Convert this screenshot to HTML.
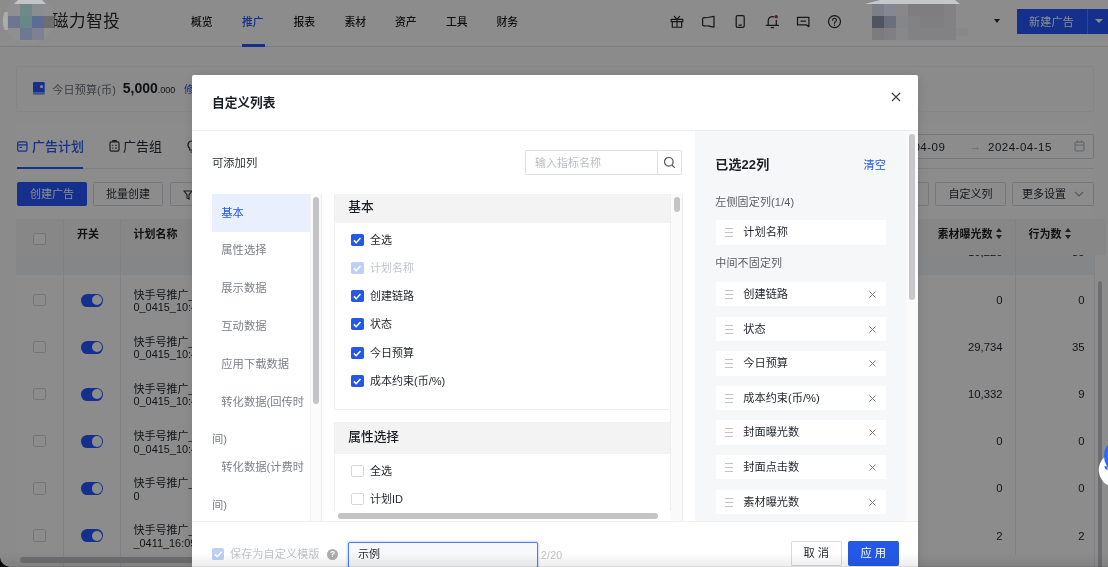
<!DOCTYPE html>
<html lang="zh-CN">
<head>
<meta charset="utf-8">
<title>磁力智投</title>
<style>
*{box-sizing:border-box;margin:0;padding:0}
html,body{width:1108px;height:567px;overflow:hidden;background:#eef0f3}
body{font-family:"Liberation Sans","Noto Sans CJK SC",sans-serif;font-size:11px;color:#1f2329;position:relative}
.abs{position:absolute}
#page{position:absolute;left:0;top:0;width:1108px;height:567px;background:#fdfdfd;overflow:hidden;will-change:transform}
/* header */
#hdr{position:absolute;left:0;top:0;width:1108px;height:47px;background:#fff;border-bottom:1px solid #e3e5e9}
#logo-t{position:absolute;left:52px;top:9px;font-size:16.500px;line-height:24px;color:#2a2a2a;letter-spacing:.6px;white-space:nowrap}
.nav{position:absolute;top:15px;font-size:10.800px;line-height:14px;font-weight:500;color:#1e1e1e;white-space:nowrap}
.nav.on{color:#2558ff}
#nav-ul{position:absolute;left:242px;top:44px;width:22.500px;height:2.500px;background:#2558ff}
.hic{position:absolute;top:14px;width:14px;height:14px}
#newad{position:absolute;left:1017px;top:9px;width:91px;height:25px;background:#2558ff;color:#fff;font-size:11px;line-height:25px}
#newad span{position:absolute;left:12px;top:1px;letter-spacing:.25px;font-size:11px}
#newad i{position:absolute;left:69.500px;top:0;width:1px;height:25px;background:#5583ff}
#newad b{position:absolute;left:78px;top:10.300px;border:4.400px solid transparent;border-top:4.800px solid #fff;width:0;height:0}
/* card */
#card{position:absolute;left:16px;top:66px;width:1078px;height:45.500px;background:#fefefe;border-radius:2px;border:1px solid #f3f3f5}
#main{position:absolute;left:16px;top:122px;width:1076px;height:460px;background:#fff}
.tab{position:absolute;top:138px;font-size:13px;line-height:18px;white-space:nowrap}
.btn{position:absolute;top:181.600px;height:24.600px;line-height:23.200px;border:1px solid #d6d9de;border-radius:1.500px;font-size:11px;text-align:center;color:#2a2e35;background:#fff;white-space:nowrap}
.btn.pri{background:#2558ff;border-color:#2558ff;color:#fff}
/* table */
#th{position:absolute;left:16px;top:219px;width:1090px;height:36px;background:#f6f6f8}
#sum{position:absolute;left:16px;top:255px;width:1078px;height:19.800px;background:#f2f5f7}
.th{position:absolute;top:226px;font-size:11px;line-height:16px;font-weight:700;color:#222;white-space:nowrap}
.vl{position:absolute;width:1px;background:#ececef}
.cb{position:absolute;left:33.300px;width:12.400px;height:12.400px;border:1px solid #d3d6db;border-radius:2px;background:#fff}
.tg{position:absolute;left:80.800px;width:22.200px;height:12.800px;border-radius:6.400px;background:#2558ff}
.tg:after{content:"";position:absolute;right:1.300px;top:1.300px;width:10.200px;height:10.200px;border-radius:5px;background:#fff}
.nm{position:absolute;left:133.500px;font-size:11px;line-height:12.200px;color:#1f2329;white-space:nowrap}
.nm span{font-size:10.900px;letter-spacing:0}
.st{display:inline-block;position:relative;width:7.600px;height:11.200px;margin-left:3.200px;vertical-align:-1.600px}
.st:before{content:"";position:absolute;left:0;top:0;border:3.800px solid transparent;border-bottom:4.600px solid #3c3c3c;border-top:0}
.st:after{content:"";position:absolute;left:0;top:6.400px;border:3.800px solid transparent;border-top:4.600px solid #3c3c3c;border-bottom:0}
.num{position:absolute;font-size:11.300px;line-height:14px;color:#1f2329;text-align:right;width:60px;white-space:nowrap}
/* mask */
#mask{position:absolute;left:0;top:0;width:1108px;height:567px;background:rgba(0,0,0,.45)}
/* modal */
#modal{will-change:transform;clip-path:inset(0 0 0 .600px);position:absolute;left:192px;top:75px;width:726px;height:500px;background:#fff;border-radius:2px 2px 0 0;overflow:hidden}
#m-title{position:absolute;left:20px;top:18px;font-size:12.700px;line-height:20px;font-weight:700;color:#1b1e24}
#m-hl{position:absolute;left:0;top:55px;width:726px;height:1px;background:#eceef1}
#rp{position:absolute;left:503px;top:56px;width:211px;height:390px;background:#f6f7f9}
#m-sb{position:absolute;left:714px;top:56px;width:12px;height:390px;background:#fafafa}
#m-sb i{position:absolute;left:3px;top:3px;width:6px;height:166px;border-radius:3px;background:#c8c8cc}
.g{color:#8f959e}
.cat{position:absolute;left:20px;width:98px;height:38px;line-height:39.600px;padding-left:9.300px;font-size:11.300px;color:#7c8088;white-space:nowrap}
.cat.on{background:#e9effd;color:#2459e8}
.wrap2{position:absolute;left:20px;font-size:11.300px;line-height:16px;color:#7c8088}
.gh{position:absolute;left:142.800px;width:335.500px;height:29px;background:#f3f3f4;font-size:12.700px;font-weight:500;line-height:27px;padding-left:13.500px;color:#1b1e24}
.ck{position:absolute;left:159.200px;width:12.400px;height:12.400px;border-radius:1.800px;background:#2459e8}
.ck svg{position:absolute;left:0;top:0}
.ck.dis{background:#bcd0f8}
.ck.off{background:#fff;border:1px solid #d3d6db}
.cl{position:absolute;left:178px;font-size:11px;line-height:16px;color:#1f2329;white-space:nowrap}
.cl.dis{color:#bfc3ca}
.it{position:absolute;left:523.500px;width:170.300px;height:24.400px;background:#fff;font-size:11.200px;line-height:25.400px;color:#1f2329;white-space:nowrap}
.it s{position:absolute;left:9px;top:8px;width:8px;height:9px;border-top:1px solid #bfc2c7;border-bottom:1px solid #bfc2c7;text-decoration:none}
.it s:after{content:"";position:absolute;left:0;top:3px;width:8px;height:1px;background:#bfc2c7}
.it span{position:absolute;left:27.800px;top:0}
.it svg{position:absolute;left:153.300px;top:9px}
.sl{position:absolute;left:523.300px;letter-spacing:.15px;font-size:11px;line-height:16px;color:#5a5f68;white-space:nowrap}
#foot{position:absolute;left:0;top:446px;width:726px;height:60px;background:#fff;border-top:1px solid #eceef1}
.fb{position:absolute;top:19.300px;width:50.500px;height:25px;border:1px solid #d6d9de;border-radius:1.500px;font-size:11.300px;line-height:23.600px;text-align:center;color:#1f2329;background:#fff;letter-spacing:3px;padding-left:3px}
.fb.pri{background:#2459e8;border-color:#2459e8;color:#fff}
</style>
</head>
<body>
<div id="page">
  <!-- header -->
  <div id="hdr">
    <div id="logo-t">磁力智投</div>
    <div class="nav" style="left:191px">概览</div>
    <div class="nav on" style="left:242px">推广</div>
    <div class="nav" style="left:293.500px">报表</div>
    <div class="nav" style="left:344.500px">素材</div>
    <div class="nav" style="left:395px">资产</div>
    <div class="nav" style="left:446px">工具</div>
    <div class="nav" style="left:496.500px">财务</div>
    <div id="nav-ul"></div>
    <svg class="abs" style="left:660px;top:10px" width="190" height="24" viewBox="660 10 190 24" fill="none" stroke="#2b2b2b" stroke-width="1.250" stroke-linejoin="round" stroke-linecap="round">
      <path d="M671.200 19.300h11.600v2.400h-11.600zM672.300 21.900v5.300h9.400v-5.300M677 19.300l-2.600-2.900M677 19.300l2.600-2.900M677 19.500v7.500" stroke-width="1.150"/>
      <path d="M706.300 17.600h-2.300q-1.400 0-1.400 1.400v5.400q0 1.400 1.400 1.400h2.300M707.600 17.500l6.400-1.200v10.800l-6.400-1.300"/>
      <rect x="736.200" y="15.600" width="8" height="11.800" rx="1.300"/><path d="M739 25h2.400"/>
      <path d="M768.200 25.200v-4.400a4.200 4.200 0 0 1 5.600-4M776.300 20.300v4.900M766.300 25.300h12.200M771.300 27.600h2.200"/>
      <circle cx="776.200" cy="16.700" r="1.700" fill="#b5342a" stroke="none"/>
      <path d="M797.500 17.300h11.400v9.300l-2.700-1.700h-8.700zM801 21.200h4.500"/>
      <circle cx="834.500" cy="21.600" r="6"/><path d="M832.600 20.200a1.900 1.900 0 1 1 2.800 1.600c-.6.400-.9.700-.9 1.500M834.500 25v.3" stroke-width="1.150"/>
    </svg>
    <div class="abs" style="left:994.300px;top:18.600px;width:0;height:0;border:3.900px solid transparent;border-top:4.500px solid #2e2e2e"></div>
    <div id="newad"><span>新建广告</span><i></i><b></b></div>
  </div>
  <div id="card">
    <svg class="abs" style="left:16.300px;top:15.300px" width="11.700" height="12.700" viewBox="0 0 13 14" preserveAspectRatio="none"><rect x="0" y="0" width="13" height="12" rx="1.500" fill="#2558ff"/><rect x="0" y="11" width="13" height="3" rx="1" fill="#7d9df2"/><rect x="8" y="3.500" width="3" height="3" rx=".8" fill="#fff"/></svg>
    <div class="abs" style="left:35.300px;top:14.500px;font-size:11px;line-height:16px;color:#6b7078;white-space:nowrap;letter-spacing:.2px">今日预算(币)</div>
    <div class="abs" style="left:105.800px;top:11.200px;font-size:14px;line-height:20px;color:#1b1e24;font-weight:700;white-space:nowrap">5,000<span style="font-size:9px;font-weight:400">.000</span></div>
    <div class="abs" style="left:167px;top:15px;font-size:10px;line-height:16px;color:#2558ff">修改</div>
  </div>
  <div id="main"></div>
  <svg class="abs" style="left:17px;top:140.800px" width="10.600" height="11" viewBox="0 0 11 11" fill="none" stroke="#2558ff" stroke-width="1.300"><rect x=".7" y=".6" width="9.600" height="9.800" rx="1.600"/><path d="M1 3.900h9M2.800 6.300h2.400"/></svg>
  <div class="tab" style="left:32px;color:#2558ff;font-weight:500">广告计划</div>
  <div class="abs" style="left:17px;top:167.400px;width:65.500px;height:2px;background:#2558ff;z-index:2"></div>
  <svg class="abs" style="left:108.500px;top:140.400px" width="11" height="12" viewBox="0 0 11 11" preserveAspectRatio="none" fill="none" stroke="#333" stroke-width="1.200"><rect x="1" y="1.800" width="9" height="8.400" rx="1.500"/><path d="M3.800 1.500V.700h3.400v.8M3.300 5h1M6.300 5h1.400M3.300 7.500h1M6.300 7.500h1.400"/></svg>
  <div class="tab" style="left:123px;color:#2a2e35">广告组</div>
  <svg class="abs" style="left:186px;top:140px" width="12" height="13" viewBox="0 0 12 13" fill="none" stroke="#333" stroke-width="1.200"><path d="M6 1a4 4 0 0 0-2.300 7.300V10h4.600V8.300A4 4 0 0 0 6 1zM4.500 12h3"/></svg>
  <div class="btn pri" style="left:17px;width:70px">创建广告</div>
  <div class="btn" style="left:93px;width:70px">批量创建</div>
  <div class="btn" style="left:170px;width:70px"><svg class="abs" style="left:12px;top:7px" width="10" height="10" viewBox="0 0 10 10" fill="none" stroke="#333" stroke-width="1.100"><path d="M1 1h8L6 4.800V9L4 8V4.800z"/></svg></div>
  <div class="abs" style="left:760px;top:134px;width:334px;height:25px;border:1px solid #d6d9de;border-radius:2px;background:#fff"></div>
  <div class="abs" style="left:881.500px;top:139px;font-size:11.500px;line-height:16px;color:#1f2329;white-space:nowrap;letter-spacing:.5px">2024-04-09</div>
  <div class="abs" style="left:970px;top:138px;font-size:11px;line-height:16px;color:#b4b8bf">→</div>
  <div class="abs" style="left:988px;top:139px;font-size:11.500px;line-height:16px;color:#1f2329;white-space:nowrap;letter-spacing:.5px">2024-04-15</div>
  <svg class="abs" style="left:1074px;top:140.300px" width="11" height="12" viewBox="0 0 11 12" fill="none" stroke="#b4b8bf" stroke-width="1.100"><rect x="1" y="2" width="9" height="9" rx="1.200"/><path d="M1 5h9M3.500 .600v2.400M7.500 .600v2.400"/></svg>
  <div class="btn" style="left:858.500px;width:70px"></div>
  <div class="btn" style="left:935px;width:71px">自定义列</div>
  <div class="btn" style="left:1012px;width:82px;text-align:left;padding-left:9px">更多设置<svg class="abs" style="left:61px;top:8px" width="10" height="7" viewBox="0 0 10 7" fill="none" stroke="#9aa0a8" stroke-width="1.100"><path d="M1 1l4 4 4-4"/></svg></div>
  <div class="abs" style="left:16px;top:168px;width:1078px;height:1px;background:#e6e7ea"></div>
  <div id="th"></div>
  <div id="sum"></div>
  <div class="abs" style="left:1094px;top:255px;width:14px;height:312px;background:#fff;border-left:1px solid #eceef0"></div>
  <div class="abs" style="left:920px;top:255px;width:172px;height:3px;overflow:hidden"><div class="num" style="left:22.500px;top:-10.500px">10,220</div><div class="num" style="left:104.500px;top:-10.500px">35</div></div>
  <div class="cb" style="top:233px"></div>
  <div class="th" style="left:77px">开关</div>
  <div class="th" style="left:133.500px">计划名称</div>
  <div class="th" style="left:937.500px">素材曝光数<i class="st"></i></div>
  <div class="th" style="left:1028.500px">行为数<i class="st"></i></div>
  <div class="vl" style="left:63px;top:219px;height:348px"></div>
  <div class="vl" style="left:120px;top:219px;height:348px"></div>
  <div class="vl" style="left:1015px;top:219px;height:336px"></div>
  <div class="cb" style="top:293.8px"></div><div class="tg" style="top:293.8px"></div>
  <div class="nm" style="top:289.05px">快手号推广_<br><span>0_0415_10:43</span></div>
  <div class="num" style="left:942.500px;top:293.0px">0</div><div class="num" style="left:1024.500px;top:293.0px">0</div>
  <div class="cb" style="top:340.9px"></div><div class="tg" style="top:340.9px"></div>
  <div class="nm" style="top:336.15px">快手号推广_<br><span>0_0415_10:42</span></div>
  <div class="num" style="left:942.500px;top:340.1px">29,734</div><div class="num" style="left:1024.500px;top:340.1px">35</div>
  <div class="cb" style="top:388.0px"></div><div class="tg" style="top:388.0px"></div>
  <div class="nm" style="top:383.15px">快手号推广_<br><span>0_0415_10:41</span></div>
  <div class="num" style="left:942.500px;top:387.2px">10,332</div><div class="num" style="left:1024.500px;top:387.2px">9</div>
  <div class="cb" style="top:435.1px"></div><div class="tg" style="top:435.1px"></div>
  <div class="nm" style="top:430.35px">快手号推广_<br><span>0_0415_10:40</span></div>
  <div class="num" style="left:942.500px;top:434.3px">0</div><div class="num" style="left:1024.500px;top:434.3px">0</div>
  <div class="cb" style="top:482.2px"></div><div class="tg" style="top:482.2px"></div>
  <div class="nm" style="top:477.35px">快手号推广_<br><span>0</span></div>
  <div class="num" style="left:942.500px;top:481.4px">0</div><div class="num" style="left:1024.500px;top:481.4px">0</div>
  <div class="cb" style="top:529.3px"></div><div class="tg" style="top:529.3px"></div>
  <div class="nm" style="top:524.45px">快手号推广_<br><span>_0411_16:09</span></div>
  <div class="num" style="left:942.500px;top:528.5px">2</div><div class="num" style="left:1024.500px;top:528.5px">2</div>
  <div class="abs" style="left:1098px;top:280.500px;width:4px;height:300px;border-radius:2px;background:#c9c9cc"></div>
  <div class="abs" style="left:19.500px;top:556.500px;width:880px;height:6px;border-radius:3px;background:#cbcbce"></div>
</div>
<div id="mask"></div>
<svg id="ov" class="abs" style="left:0;top:0" width="1108" height="567" viewBox="0 0 1108 567">
  <!-- logo blur -->
  <circle cx="29" cy="19.500" r="24.600" fill="#8f8f91"/>
  <path d="M4.600 12a24.600 24.600 0 0 0 0 18l3.200 0v-18z" fill="#b3b4b7" opacity=".8"/>
  <path d="M18 0h24l4 4h-32z" fill="#c2c4c8"/>
  <rect x="20" y="4" width="12" height="12" fill="#6f8988"/><rect x="32" y="4" width="12" height="12" fill="#8a8e8f"/>
  <rect x="8" y="16" width="12" height="12" fill="#6e7590"/><rect x="20" y="16" width="12" height="12" fill="#6a8788"/><rect x="32" y="16" width="12" height="12" fill="#5c6d91"/><rect x="44" y="16" width="10.500" height="12" fill="#6e6e6e"/>
  <rect x="20" y="28" width="12" height="12" fill="#6f7892"/><rect x="32" y="28" width="12" height="12" fill="#7e8290"/>
  <path d="M0 567V557.500Q.8 565 9.500 567z" fill="#050505"/>
  <circle cx="1116" cy="470" r="17.300" fill="#fdfdfe"/><ellipse cx="1113.500" cy="456" rx="9.500" ry="14" fill="#2b6cf6"/><path d="M1104.500 466l3 .6v3.600q-3-1-3-4.200z" fill="#2b6cf6"/>
  <!-- account blur -->
  <path d="M880 0h75l5 4h-95z" fill="#c5c7ca"/>
  <rect x="872" y="4" width="12" height="12" fill="#7d7f88"/><rect x="884" y="4" width="12" height="12" fill="#858892"/>
  <rect x="872" y="16" width="12" height="12" fill="#4f5461"/><rect x="884" y="16" width="12" height="12" fill="#6a6f7b"/>
  <rect x="872" y="28" width="12" height="12" fill="#7c7c80"/><rect x="884" y="28" width="12" height="12" fill="#808083"/>
  <rect x="896" y="4" width="12" height="36" fill="#88888b"/><rect x="896" y="16" width="12" height="12" fill="#84868b"/>
  <rect x="908" y="4" width="48" height="36" fill="#828284"/><rect x="908" y="4" width="36" height="12" fill="#7e7e80"/><rect x="920" y="16" width="24" height="12" fill="#7f7f82"/>
  <rect x="956" y="28" width="12" height="8" fill="#87878a"/>
</svg>
<div class="abs" style="left:192.600px;top:75px;width:725.400px;height:500px;box-shadow:0 2px 12px rgba(0,0,0,.14)"></div>
<div id="modal">
  <div id="m-title">自定义列表</div>
  <div id="m-hl"></div>
  <div id="rp"></div>
  <div id="m-sb"><i></i></div>
  <svg class="abs" style="left:699px;top:17px" width="10" height="10" viewBox="0 0 10 10" fill="none" stroke="#444" stroke-width="1.300"><path d="M1 1l8 8M9 1l-8 8"/></svg>
  <div class="abs" style="left:20px;top:79.800px;font-size:11.300px;line-height:16px;color:#2a2e35">可添加列</div>
  <div class="abs" style="left:333px;top:75px;width:157px;height:25px;border:1px solid #dfe0e3;border-radius:1px;background:#fff"></div>
  <div class="abs" style="left:465px;top:75px;width:1px;height:25px;background:#dfe0e3"></div>
  <div class="abs" style="left:343px;top:79.800px;font-size:11px;line-height:16px;color:#babdc3;white-space:nowrap">输入指标名称</div>
  <svg class="abs" style="left:471px;top:80.500px" width="13" height="13" viewBox="0 0 13 13" fill="none" stroke="#555" stroke-width="1.200"><circle cx="5.800" cy="5.800" r="4.300"/><path d="M9 9l2.800 2.800"/></svg>
  <div class="abs" style="left:118.300px;top:119px;width:11px;height:327px;background:#fbfbfb;border-left:1px solid #f1f1f2"></div>
  <div class="abs" style="left:121.200px;top:122px;width:5.600px;height:207px;border-radius:3px;background:#c4c4c6"></div>
  <div class="abs" style="left:129px;top:119px;width:1px;height:327px;background:#eceef1"></div>
  <div class="abs" style="left:142.300px;top:119px;width:336.500px;height:215.600px;border:1px solid #eceef1"></div>
  <div class="abs" style="left:142.300px;top:347.200px;width:336.500px;height:120px;border:1px solid #eceef1"></div>
  <div class="abs" style="left:478px;top:119px;width:13px;height:327px;background:#fafafa;border-left:1px solid #eceef1;border-right:1px solid #eceef1"></div>
  <div class="abs" style="left:482px;top:122px;width:6px;height:15px;border-radius:3px;background:#c4c4c6"></div>
  <div class="cat on" style="top:119px">基本</div>
  <div class="cat" style="top:156px">属性选择</div>
  <div class="cat" style="top:194px">展示数据</div>
  <div class="cat" style="top:232px">互动数据</div>
  <div class="cat" style="top:270px">应用下载数据</div>
  <div class="cat" style="top:308px">转化数据(回传时</div>
  <div class="cat" style="top:373px">转化数据(计费时</div>
  <div class="wrap2" style="top:356px">间)</div>
  <div class="wrap2" style="top:422px">间)</div>
  <div class="gh" style="top:119px;height:29.400px;line-height:26.400px">基本</div>
  <div class="ck " style="top:159px"><svg width="12.400" height="12.400" viewBox="0 0 12 12" fill="none" stroke="#fff" stroke-width="1.500"><path d="M2.800 6.200l2.200 2.200 4.200-4.600"/></svg></div><div class="cl " style="top:157px">全选</div>
  <div class="ck dis" style="top:187px"><svg width="12.400" height="12.400" viewBox="0 0 12 12" fill="none" stroke="#fff" stroke-width="1.500"><path d="M2.800 6.200l2.200 2.200 4.200-4.600"/></svg></div><div class="cl dis" style="top:185px">计划名称</div>
  <div class="ck " style="top:215px"><svg width="12.400" height="12.400" viewBox="0 0 12 12" fill="none" stroke="#fff" stroke-width="1.500"><path d="M2.800 6.200l2.200 2.200 4.200-4.600"/></svg></div><div class="cl " style="top:213px">创建链路</div>
  <div class="ck " style="top:243px"><svg width="12.400" height="12.400" viewBox="0 0 12 12" fill="none" stroke="#fff" stroke-width="1.500"><path d="M2.800 6.200l2.200 2.200 4.200-4.600"/></svg></div><div class="cl " style="top:241px">状态</div>
  <div class="ck " style="top:272px"><svg width="12.400" height="12.400" viewBox="0 0 12 12" fill="none" stroke="#fff" stroke-width="1.500"><path d="M2.800 6.200l2.200 2.200 4.200-4.600"/></svg></div><div class="cl " style="top:270px">今日预算</div>
  <div class="ck " style="top:300px"><svg width="12.400" height="12.400" viewBox="0 0 12 12" fill="none" stroke="#fff" stroke-width="1.500"><path d="M2.800 6.200l2.200 2.200 4.200-4.600"/></svg></div><div class="cl " style="top:298px">成本约束(币/%)</div>
  <div class="gh" style="top:347.200px;height:32px;line-height:31.600px">属性选择</div>
  <div class="ck off" style="top:390px"></div><div class="cl" style="top:388px">全选</div>
  <div class="ck off" style="top:418px"></div><div class="cl" style="top:416px">计划ID</div>
  <div class="abs" style="left:142px;top:436px;width:337px;height:10px;background:#fff"></div>
  <div class="abs" style="left:146px;top:438px;width:320px;height:6px;border-radius:3px;background:#c4c4c6"></div>
  <div class="abs" style="left:523.300px;top:80.700px;font-size:13px;line-height:18px;font-weight:700;color:#1b1e24;white-space:nowrap;letter-spacing:.1px">已选22列</div>
  <div class="abs" style="left:671.500px;top:82px;font-size:11.200px;line-height:16px;color:#2459e8;white-space:nowrap">清空</div>
  <div class="sl" style="top:119px">左侧固定列(1/4)</div>
  <div class="it" style="top:145.300px;height:24.600px"><s></s><span>计划名称</span></div>
  <div class="sl" style="top:180px">中间不固定列</div>
  <div class="it" style="top:207.0px"><s></s><span>创建链路</span><svg width="7" height="7" viewBox="0 0 7 7" fill="none" stroke="#6e727a" stroke-width=".900"><path d="M.5.5l6 6M6.500.5l-6 6"/></svg></div>
  <div class="it" style="top:241.6px"><s></s><span>状态</span><svg width="7" height="7" viewBox="0 0 7 7" fill="none" stroke="#6e727a" stroke-width=".900"><path d="M.5.5l6 6M6.500.5l-6 6"/></svg></div>
  <div class="it" style="top:276.2px"><s></s><span>今日预算</span><svg width="7" height="7" viewBox="0 0 7 7" fill="none" stroke="#6e727a" stroke-width=".900"><path d="M.5.5l6 6M6.500.5l-6 6"/></svg></div>
  <div class="it" style="top:310.8px"><s></s><span>成本约束(币/%)</span><svg width="7" height="7" viewBox="0 0 7 7" fill="none" stroke="#6e727a" stroke-width=".900"><path d="M.5.5l6 6M6.500.5l-6 6"/></svg></div>
  <div class="it" style="top:345.4px"><s></s><span>封面曝光数</span><svg width="7" height="7" viewBox="0 0 7 7" fill="none" stroke="#6e727a" stroke-width=".900"><path d="M.5.5l6 6M6.500.5l-6 6"/></svg></div>
  <div class="it" style="top:380.0px"><s></s><span>封面点击数</span><svg width="7" height="7" viewBox="0 0 7 7" fill="none" stroke="#6e727a" stroke-width=".900"><path d="M.5.5l6 6M6.500.5l-6 6"/></svg></div>
  <div class="it" style="top:414.6px"><s></s><span>素材曝光数</span><svg width="7" height="7" viewBox="0 0 7 7" fill="none" stroke="#6e727a" stroke-width=".900"><path d="M.5.5l6 6M6.500.5l-6 6"/></svg></div>
  <div id="foot">
    <div class="ck dis" style="left:20px;top:26px"><svg width="12.400" height="12.400" viewBox="0 0 12 12" fill="none" stroke="#fff" stroke-width="1.500"><path d="M2.800 6.200l2.200 2.200 4.200-4.600"/></svg></div>
    <div class="abs" style="left:38px;top:24px;font-size:11px;line-height:16px;color:#bfc3ca;white-space:nowrap;letter-spacing:.2px">保存为自定义模版</div>
    <div class="abs" style="left:134.800px;top:26.700px;width:11.600px;height:11.600px;border-radius:6px;background:#adadb0;color:#fff;font-size:8.500px;line-height:11.600px;text-align:center;font-weight:700">?</div>
    <div class="abs" style="left:156px;top:20px;width:190px;height:26px;border:1px solid #4a7df0;border-radius:2px;box-shadow:0 0 0 1.500px rgba(36,89,232,.16);background:#f7f8f9"></div>
    <div class="abs" style="left:166px;top:24px;font-size:11px;line-height:16px;color:#1f2329">示例</div>
    <div class="abs" style="left:349px;top:27px;font-size:10.500px;line-height:12px;color:#c0c2c6;letter-spacing:.2px">2/20</div>
    <div class="fb" style="left:599px">取消</div>
    <div class="fb pri" style="left:656px">应用</div>
  </div>
</div>
<div class="abs" style="left:0;top:553px;width:1108px;height:14px;background:linear-gradient(to bottom,rgba(0,0,0,0),rgba(0,0,0,.075))"></div>
<div class="abs" style="left:0;top:566px;width:1108px;height:1px;background:rgba(0,0,0,.08)"></div>
</body>
</html>
